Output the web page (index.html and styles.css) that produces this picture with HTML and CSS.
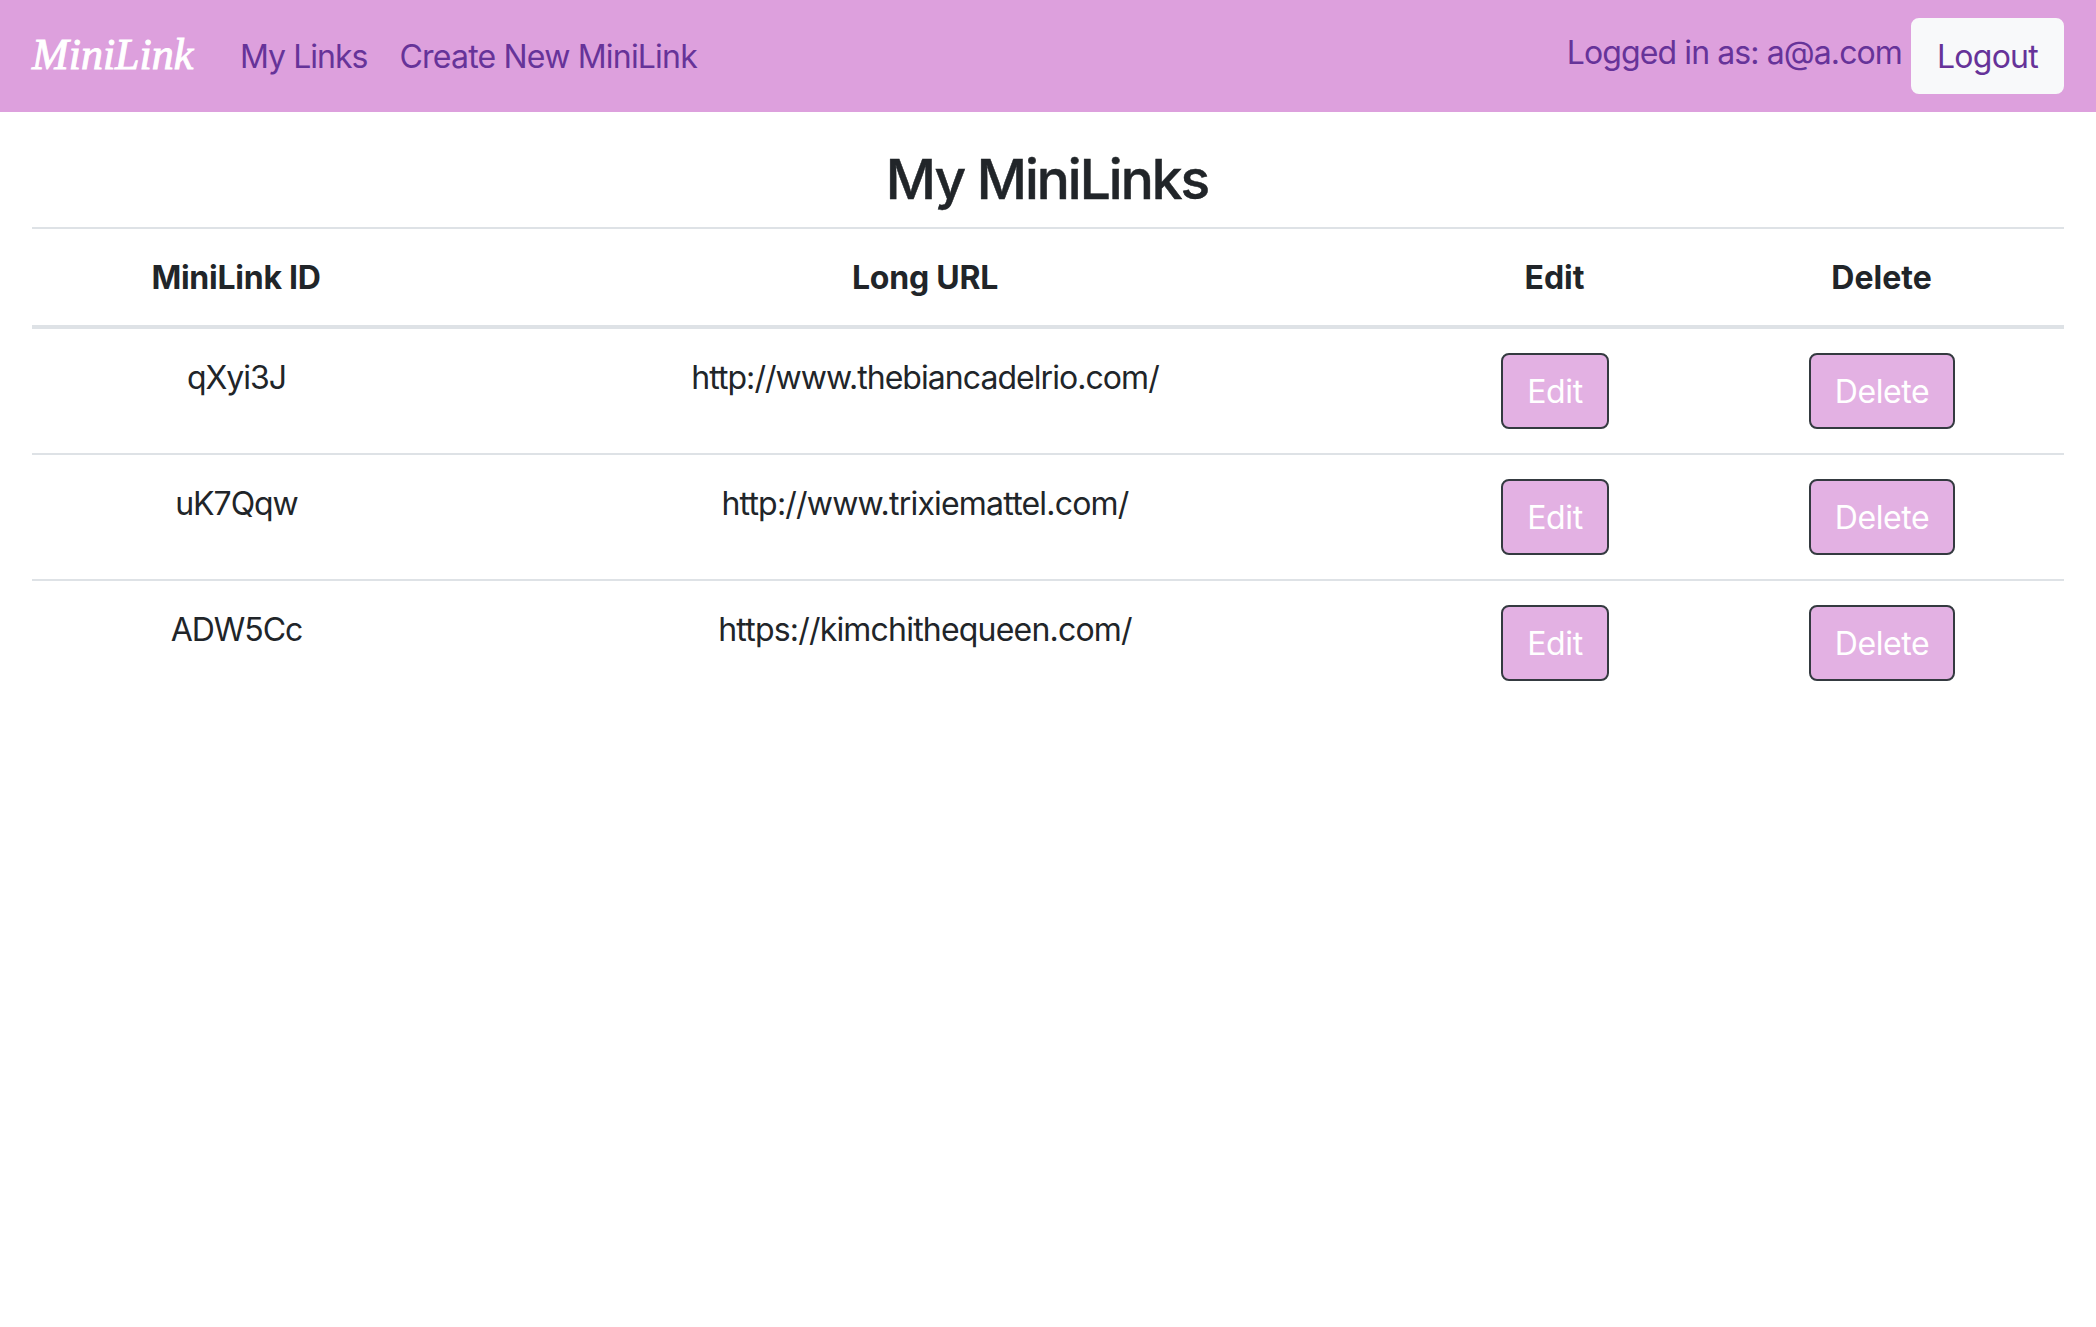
FILE: index.html
```
<!DOCTYPE html>
<html lang="en">
<head>
<meta charset="utf-8">
<title>MiniLink</title>
<link rel="stylesheet" href="styles.css">
</head>
<body>
<nav class="navbar">
  <a class="brand">MiniLink</a>
  <div class="nav-links">
    <a class="nav-link">My Links</a>
    <a class="nav-link create">Create New MiniLink</a>
  </div>
  <form class="session">
    <span class="user">Logged in as: a@a.com</span>
    <button type="button" class="btn btn-light">Logout</button>
  </form>
</nav>
<main class="content">
  <h3 class="title">My MiniLinks</h3>
  <table class="table">
    <colgroup>
      <col class="col-id"><col class="col-url"><col class="col-edit"><col class="col-delete">
    </colgroup>
    <thead>
      <tr><th>MiniLink ID</th><th>Long URL</th><th class="action">Edit</th><th class="action">Delete</th></tr>
    </thead>
    <tbody>
      <tr>
        <td class="id">qXyi3J</td><td class="url long">http://www.thebiancadelrio.com/</td>
        <td><button type="button" class="btn btn-edit">Edit</button></td>
        <td><button type="button" class="btn btn-delete">Delete</button></td>
      </tr>
      <tr>
        <td class="id">uK7Qqw</td><td class="url">http://www.trixiemattel.com/</td>
        <td><button type="button" class="btn btn-edit">Edit</button></td>
        <td><button type="button" class="btn btn-delete">Delete</button></td>
      </tr>
      <tr>
        <td class="id">ADW5Cc</td><td class="url">https://kimchithequeen.com/</td>
        <td><button type="button" class="btn btn-edit">Edit</button></td>
        <td><button type="button" class="btn btn-delete">Delete</button></td>
      </tr>
    </tbody>
  </table>
</main>
</body>
</html>
```
FILE: styles.css
```
* { box-sizing: border-box; }
body {
  margin: 0;
  background: #fff;
  color: #212529;
  font: 400 32px/48px Inter, "Liberation Sans", sans-serif;
}
.navbar {
  display: flex;
  align-items: center;
  height: 112px;
  padding: 16px 32px;
  background: #dda0dd;
  color: #663399;
}
.brand {
  width: 176px;
  padding-bottom: 2px;
  color: #fff;
  font: italic 400 44px/60px "Apple Chancery", "Z003", "URW Chancery L", "Liberation Serif", serif;
  -webkit-text-stroke: 1px #fff;
}
.nav-links { display: flex; gap: 32px; padding: 2px 0 0 32px; }
.nav-link { white-space: nowrap; letter-spacing: -0.97px; }
.create { letter-spacing: -0.8px; }
.session { display: flex; gap: 9px; margin-left: auto; }
.user { padding-top: 11px; letter-spacing: -0.9px; }
.btn {
  display: inline-block;
  height: 76px;
  padding: 2px 0 0;
  border: 2px solid transparent;
  border-radius: 8px;
  font: inherit;
  letter-spacing: -0.4px;
}
.btn-light {
  width: 153px;
  background: #f8f9fa;
  border-color: #f8f9fa;
  color: #663399;
  letter-spacing: -0.75px;
}
.content { padding: 32px 32px 0; }
.title {
  margin: 0;
  padding: 2px 2px 14px 0;
  font-size: 55px;
  font-weight: 500;
  line-height: 67px;
  letter-spacing: -2px;
  text-align: center;
  -webkit-text-stroke: 0.5px #212529;
}
.table { width: 2032px; table-layout: fixed; border-collapse: collapse; text-align: center; }
.col-id { width: 409px; }
.col-url { width: 969px; }
.col-edit { width: 290px; }
.table th, .table td { padding: 24px; border-top: 2px solid #dee2e6; vertical-align: top; }
.table thead th {
  padding: 25px 25px 23px 24px;
  border-bottom: 4px solid #dee2e6;
  font-weight: 700;
  letter-spacing: -0.25px;
}
.table thead .action { letter-spacing: 0; }
.table .id { padding-top: 25px; letter-spacing: -1.05px; }
.table .url { padding: 25px 25px 23px 24px; letter-spacing: -0.8px; }
.table .long { letter-spacing: -0.95px; }
.table .btn { display: block; margin: 0 auto; background: #e3b1e3; border-color: #343a40; color: #fff; }
.btn-edit { width: 108px; }
.btn-delete { width: 146px; }
```
